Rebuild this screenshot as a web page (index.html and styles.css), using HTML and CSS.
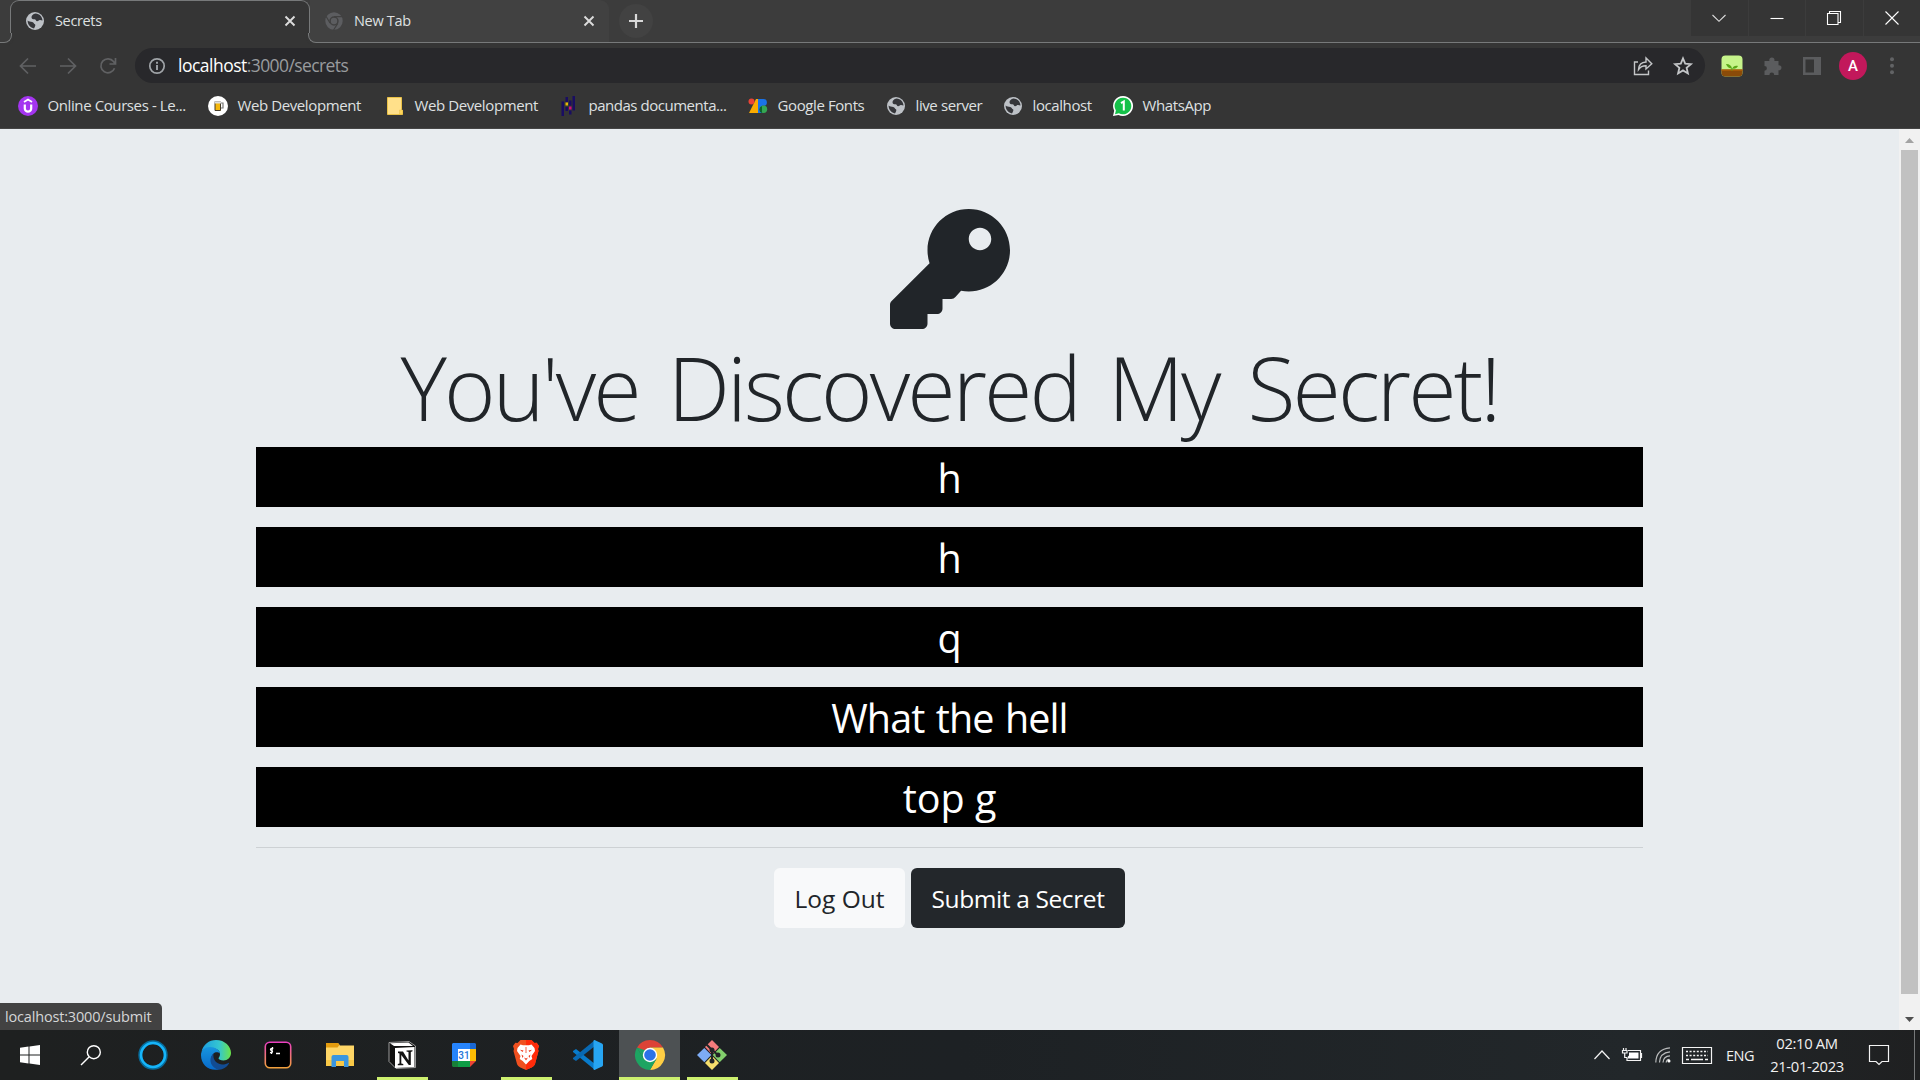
FILE: index.html
```html
<!DOCTYPE html>
<html lang="en">
<head>
<meta charset="utf-8">
<title>Secrets</title>
<link rel="stylesheet" href="styles.css">
</head>
<body>
<svg class="defs" width="0" height="0" aria-hidden="true">
  <symbol id="globe" viewBox="0 0 20 20"><circle cx="10" cy="10" r="9" fill="#bdc1c6"/><path d="M10.5 2.500C8 3 6.500 4.500 6.500 6.200c0 1.800 1.500 2 3 2.100 1.500.1 1.300 1.900 2.600 2 1.200.1 1.500-1.500 3-1.300 1 .1 1.700.7 2.400.5-.1-3.600-2.900-6.800-7-7zM2.600 9.500c1.300 1.300 3 1.100 4.600 1.500 1.700.4 1.400 1.700 2.700 2.200.9.4.4 2.300-.9 4.200-3.500-.5-6.400-3.600-6.400-7.900z" fill="#35363a"/></symbol>
</svg>
<div class="screen">
  <header class="tabstrip">
    <div class="lead"></div>
    <div class="tab active">
      <svg class="fav" viewBox="0 0 20 20"><use href="#globe"/></svg>
      <span class="tab-title t-secrets">Secrets</span>
      <svg class="close" viewBox="0 0 12 12"><path d="M1.500 1.500l9 9m0-9l-9 9"/></svg>
    </div>
    <div class="tab idle">
      <svg class="fav" viewBox="0 0 20 20"><circle cx="10" cy="10" r="6.700" fill="none" stroke="#5c5d60" stroke-width="4"/><circle cx="10" cy="10" r="3.200" fill="#5c5d60"/><path d="M10 5.700h8.500M6 12L2 5.200M13.800 12.400L9.600 19" stroke="#414141" stroke-width="1.200"/></svg>
      <span class="tab-title t-newtab">New Tab</span>
      <svg class="close" viewBox="0 0 12 12"><path d="M1.500 1.500l9 9m0-9l-9 9"/></svg>
    </div>
    <div class="newtab"><svg width="16" height="16" viewBox="0 0 16 16"><path d="M8 1v14M1 8h14" stroke="#d8d8d8" stroke-width="2.200"/></svg></div>
    <div class="winbtns">
      <div><svg width="14" height="8" viewBox="0 0 14 8"><path class="thin" d="M.5 1L7 7.300 13.500 1"/></svg></div>
      <div><svg width="14" height="14" viewBox="0 0 14 14"><path d="M.5 7.500h13"/></svg></div>
      <div><svg width="14" height="14" viewBox="0 0 14 14"><path d="M.5 2.500h10.500v11H.5zM2.500 2.500v-2h11v11h-2.500"/></svg></div>
      <div><svg width="14" height="14" viewBox="0 0 14 14"><path d="M.5.5l13 13m0-13l-13 13"/></svg></div>
    </div>
  </header>

  <nav class="toolbar">
    <div class="navbtns">
      <svg width="18" height="18" viewBox="0 0 18 18"><path d="M17 9H2m7-7.500L1.500 9 9 16.500"/></svg>
      <svg width="18" height="18" viewBox="0 0 18 18"><path d="M1 9h15M9 1.500L16.500 9 9 16.500"/></svg>
      <svg width="18" height="18" viewBox="0 0 18 18"><path d="M15.500 11.200A7 7 0 1 1 14.500 4.600l1.500 2M16.500 1v6h-6"/></svg>
    </div>
    <div class="omnibox">
      <svg class="info" width="18" height="18" viewBox="0 0 18 18"><circle cx="9" cy="9" r="7.200" fill="none" stroke="#a0a4a8" stroke-width="1.700"/><path d="M9 8v5M9 4.800v1.900" stroke="#a0a4a8" stroke-width="1.900"/></svg>
      <span class="url"><b>localhost</b>:3000/secrets</span>
      <svg class="share" width="20" height="20" viewBox="0 0 20 20"><path d="M5 6H1.500v12.500h14v-4M5.500 13.500c.3-4.800 2.800-7.300 7.500-7.500V2l5.800 5.800L13 13V9.800c-3.500 0-5.700 1-7.500 3.700z"/></svg>
      <svg class="star" width="20" height="20" viewBox="0 0 20 20"><path d="M10 2.300l2.200 5.300 5.700.5-4.300 3.700 1.300 5.600-4.900-3-4.900 3 1.300-5.600L2.100 8.100l5.700-.5z"/></svg>
    </div>
    <div class="tools">
      <svg width="22" height="22" viewBox="0 0 22 22"><defs><clipPath id="pc"><rect x=".5" y=".5" width="21" height="21" rx="4"/></clipPath></defs><g clip-path="url(#pc)"><path d="M0 0h22v22H0z" fill="#c6f48a"/><path d="M0 14.500h22V22H0z" fill="#8a4b08"/><path d="M0 14.500h22v1.500H0z" fill="#a85b08"/></g><path d="M11 13.500C8.500 13.500 6 12 5 9c3-.2 5.500 1.300 6 4.500zM11.500 13.500c.5-2.500 3-3.300 5.500-2.500-.8 2-3 3-5.500 2.500zM10.300 13h1.200v2.500h-1.200z" fill="#5aa718"/></svg>
      <svg width="20" height="20" viewBox="0 0 20 20"><path d="M2 5h4.500a2.600 2.600 0 1 1 4.800 0H15.500v4.300a2.500 2.500 0 1 1 0 4.900V19H11.200a2.400 2.400 0 1 0-4.800 0H1.500v-4.300a2.400 2.400 0 1 0 0-4.800V5z" fill="#5b5c5e"/></svg>
      <svg width="18" height="18" viewBox="0 0 18 18"><path d="M0 0h18v18H0zM2.500 2.500v13H11v-13z" fill="#5b5c5e" fill-rule="evenodd"/></svg>
      <div class="avatar">A</div>
      <svg width="4" height="18" viewBox="0 0 4 18"><g fill="#626365"><circle cx="2" cy="2.200" r="2"/><circle cx="2" cy="8.800" r="2"/><circle cx="2" cy="15.300" r="2"/></g></svg>
    </div>
  </nav>

  <nav class="bookmarks">
    <div class="bm w1"><svg viewBox="0 0 20 20"><circle cx="10" cy="10" r="10" fill="#a435f0"/><path d="M6.800 8.500v4a3.200 3.200 0 0 0 6.400 0v-4" fill="none" stroke="#fff" stroke-width="2.200"/><path d="M6 6l4-2.500L14 6" fill="none" stroke="#fff" stroke-width="1.800"/></svg><span>Online Courses - Le...</span></div>
    <div class="bm w2"><svg viewBox="0 0 20 20"><circle cx="10" cy="10" r="10" fill="#fff"/><path d="M12.500 7h2.500v5h-2.500" fill="none" stroke="#777" stroke-width="1.200"/><path d="M7 5.500h5.500V14.500H7z" fill="#f4b70c" stroke="#443b27"/><path d="M6.500 5.200h6.500v2.300H6.500z" fill="#ddd"/></svg><span>Web Development</span></div>
    <div class="bm w3"><svg viewBox="0 0 20 20"><path d="M2.500 1.500h14v12l1 1v4h-15z" fill="#ffe08a" stroke="#e9c147"/><path d="M14.500 14h3v4h-3z" fill="#ffd65c" stroke="#e9c147" stroke-width=".5"/></svg><span>Web Development</span></div>
    <div class="bm w4"><svg viewBox="0 0 20 20"><path d="M2.500 5.500H5V20H2.500zM13.500 0H16v14.500h-2.500zM6.500 1H9v5H6.500zM6.500 11H9v4H6.500zM10 4.500h2.500v5H10zM10 14.500h2.500v4H10z" fill="#190d62"/><path d="M6.500 6.500H9V9.500H6.500z" fill="#e5b70c"/><path d="M10 10.500h2.500v3H10z" fill="#d60b7a"/></svg><span>pandas documenta...</span></div>
    <div class="bm w5"><svg viewBox="0 0 20 20"><path d="M8 3h4v14H1z" fill="#f9ab00"/><circle cx="3.500" cy="5.500" r="3" fill="#ea4335"/><path d="M10 3h5.500a3.400 3.400 0 0 1 0 6.800H10z" fill="#1a73e8"/><path d="M10 3h4v14h-4z" fill="#1a73e8"/><circle cx="15.500" cy="13.300" r="3.700" fill="#34a853"/><path d="M14 9.900v7.100a3.700 3.700 0 0 1 0-7.100z" fill="#0d652d"/></svg><span>Google Fonts</span></div>
    <div class="bm w6"><svg viewBox="0 0 20 20"><use href="#globe"/></svg><span>live server</span></div>
    <div class="bm w7"><svg viewBox="0 0 20 20"><use href="#globe"/></svg><span>localhost</span></div>
    <div class="bm w8"><svg viewBox="0 0 20 20"><path d="M10 0a10 10 0 1 1-4.500 18.900L0 20l1.200-5.300A10 10 0 0 1 10 0z" fill="#fff"/><path d="M10.200 1.700a8.300 8.300 0 1 1-4.300 15.500l-3.900 1 .9-3.800A8.300 8.300 0 0 1 10.200 1.700z" fill="#15c149"/><path d="M8 7.200l2.800-1.700v9" fill="none" stroke="#fff" stroke-width="2"/></svg><span>WhatsApp</span></div>
  </nav>

  <div class="viewport">
    <main class="page">
      <svg class="key" width="120" height="120" viewBox="0 0 512 512"><path fill="#212529" d="M512 176.001C512 273.203 433.202 352 336 352c-11.220 0-22.190-1.062-32.827-3.069l-24.012 27.014A23.999 23.999 0 0 1 261.223 384H224v40c0 13.255-10.745 24-24 24h-40v40c0 13.255-10.745 24-24 24H24c-13.255 0-24-10.745-24-24v-78.059c0-6.365 2.529-12.470 7.029-16.971l161.802-161.802C163.108 213.814 160 195.271 160 176 160 78.798 238.797.001 335.999 0 433.488-.001 512 78.511 512 176.001zM336 128c0 26.510 21.490 48 48 48s48-21.490 48-48-21.490-48-48-48-48 21.490-48 48z"/></svg>
      <h1>You've Discovered My Secret!</h1>
      <p class="secret">h</p>
      <p class="secret">h</p>
      <p class="secret">q</p>
      <p class="secret phrase">What the hell</p>
      <p class="secret">top g</p>
      <hr>
      <div class="actions"><a class="btn light">Log Out</a><a class="btn dark">Submit a Secret</a></div>
      <div class="status"><span>localhost:3000/submit</span></div>
    </main>
    <div class="scrollbar">
      <svg width="9" height="5" viewBox="0 0 9 5"><path d="M0 5L4.500 0 9 5z" fill="#a3a3a3"/></svg>
      <div class="thumb"></div>
      <svg width="9" height="5" viewBox="0 0 9 5"><path d="M0 0h9L4.500 5z" fill="#505050"/></svg>
    </div>
  </div>

  <footer class="taskbar">
    <div class="app start"><svg width="20" height="20" viewBox="0 0 20 20"><path d="M0 2.800l8.500-1.200v7.900H0zM9.500 1.400L20 0v9.500H9.500zM0 10.500h8.500v7.900L0 17.200zM9.500 10.500H20V20L9.500 18.600z" fill="#fff"/></svg></div>
    <div class="app search"><svg width="20" height="20" viewBox="0 0 20 20"><path d="M0 20l8-8" stroke="#fff" stroke-width="1.500"/><circle cx="12.800" cy="7.200" r="6.500" fill="none" stroke="#fff" stroke-width="1.400"/></svg></div>
    <div class="app cortana"><svg width="30" height="30" viewBox="0 0 30 30"><circle cx="15" cy="15" r="12.700" fill="none" stroke="#086c9b" stroke-width="4"/><circle cx="15" cy="15" r="12" fill="none" stroke="#16b5fa" stroke-width="2.500"/></svg></div>
    <div class="app"><svg width="30" height="30" viewBox="0 0 30 30"><defs><linearGradient id="e1"><stop offset="0" stop-color="#1b9de2"/><stop offset=".6" stop-color="#35c6d0"/><stop offset="1" stop-color="#6be548"/></linearGradient><linearGradient id="e2" x2="0" y2="1"><stop offset="0" stop-color="#1795df"/><stop offset="1" stop-color="#0869c9"/></linearGradient></defs><path d="M.5 12C2 4.500 8 0 15 0c9 0 15 6.500 15 13 0 4.500-3.500 7.500-7.500 7.500-3 0-5-1.200-5-2.200 0-.8 1.500-1.500 1.500-4 0-3.500-3-6-8-6-5 0-9 1-10.500 3.700z" fill="url(#e1)"/><path d="M0 15c0-5 4-8 9-8 5.500 0 9.500 3 10 6.500-2-2-5-1.500-6.500 0-5 5-1.500 13.500 5.500 16C8 31.500 0 25 0 15z" fill="url(#e2)"/><path d="M12.500 13.500C11.500 19 15 24 21 24.500c2.500.1 5-1 6.500-1.600.5-.2.700.2.500.6-2.500 4-6 6-10 6.300C10 28 6.500 19 12.500 13.500z" fill="#124c93"/></svg></div>
    <div class="app term"><svg width="28" height="28" viewBox="0 0 28 28"><defs><linearGradient id="t1" x2="0" y2="1"><stop offset="0" stop-color="#ea3fc0"/><stop offset="1" stop-color="#f2a13c"/></linearGradient></defs><rect x="1.300" y="1.300" width="25.400" height="25.400" rx="4.500" fill="#000" stroke="url(#t1)" stroke-width="1.600"/><path d="M9.300 7.500c-3-.8-3.500 1.500-1.800 2s1.200 2.700-1.500 2M8.500 6l-1 7M12 12.500h4" fill="none" stroke="#fff" stroke-width="1.300"/></svg></div>
    <div class="app"><svg width="28" height="24" viewBox="0 0 28 24"><path d="M0 0h12l2 2.500H28V23H0z" fill="#ffd667"/><path d="M0 0h12l1.500 2-2 2.500H0z" fill="#e39b0e"/><path d="M0 17h28v6H0z" fill="#f9c846"/><path d="M5.500 24V14a2 2 0 0 1 2-2h13a2 2 0 0 1 2 2v10h-4.500v-6h-8v6z" fill="#3b96df"/></svg></div>
    <div class="app open notion"><svg width="28" height="28" viewBox="0 0 28 28"><path d="M1 1.500L21 .5l6.500 4.500v21.500L8 27.500 1 20.500z" fill="#111" stroke="#bbb" stroke-width=".8"/><path d="M2 2.300L20.500 1.500 25 5H6z" fill="#fff"/><path d="M7 7l19.500-1v20L7 27z" fill="#fff"/><path d="M10 10.500h5l5.500 9V11l-2-.4V9.500l6-.3v1.100l-1.700.6v13h-2L13.300 14v8.500l2 .5v1.300h-5.500V23l1.700-.5v-10L10 12z" fill="#111"/></svg></div>
    <div class="app"><svg class="cal" width="24" height="24" viewBox="0 0 24 24"><path d="M1 0h17v6H0V1z" fill="#2684fc"/><path d="M0 6h6v12H0z" fill="#2684fc"/><path d="M18 0h5l1 1v5h-6z" fill="#1967d2"/><path d="M18 6h6v12h-6z" fill="#fbbc04"/><path d="M6 18h12v6H6z" fill="#0f9d46"/><path d="M0 18h6v6H1l-1-1z" fill="#188038"/><path d="M18 18h6l-6 6z" fill="#ea4335"/><path d="M6 6h12v12H6z" fill="#fff"/><text x="12" y="15.700" text-anchor="middle" font-size="10" font-family="Roboto" font-weight="500" fill="#2676d9">31</text></svg></div>
    <div class="app open"><svg width="26" height="30" viewBox="0 0 26 30"><path d="M7.500 0h11l3 3 2.200-.3L26 6l-1 3 .5 2-3.500 13c-1 3-5 4-9 6-4-2-8-3-9-6L.5 11 1 9 0 6l2.300-3.300 2.200.3z" fill="#f0501f"/><path d="M13 0h5.500l3 3 2.200-.3L26 6l-1 3 .5 2-3.500 13c-1 3-5 4-9 6z" fill="#ff2b0a"/><path d="M4.500 8l3-3.500 2.500.8h6l2.500-.8 3 3.500.5 3-3.500 5 .8 3-3 2L13 24.500l-3.300-3.500-3-2 .8-3L4 11z" fill="#fff"/><path d="M7 9.800l3.500.7-1 1.500zM19 9.800l-3.500.7 1 1.500zM11 17.500l2 1 2-1-2 3zM12.600 7h.8v6h-.8zM8.500 14.500l2 1.500-1 2zM17.500 14.500l-2 1.500 1 2z" fill="#f0381a"/></svg></div>
    <div class="app"><svg width="30" height="30" viewBox="0 0 30 30"><path d="M0 11l3-2 19 15v6L0 12z" fill="#087bcb"/><path d="M0 19l3 2L22 6V0L0 18z" fill="#0869b3"/><path d="M21.500 0L29 3.500q1 .5 1 1.500v20q0 1-1 1.500L21.500 30q-1 0-1-1V1q0-1 1-1z" fill="#27a5f2"/></svg></div>
    <div class="app open current"><svg width="30" height="30" viewBox="0 0 30 30"><path d="M15 15L2 7.500A15 15 0 0 1 28 7.500H15z" fill="#dc4337"/><path d="M28 7.500A15 15 0 0 1 15 30l6.500-11.300L15 7.500z" fill="#ffce44"/><path d="M2 7.500A15 15 0 0 0 15 30l6.500-11.300H15L8.500 18.700z" fill="#1da462"/><path d="M2 7.500l6.500 11.300L15 12z" fill="#1da462"/><circle cx="15" cy="15" r="7.200" fill="#fff"/><circle cx="15" cy="15" r="5.800" fill="#2c72e8"/></svg></div>
    <div class="app open git"><svg width="30" height="30" viewBox="0 0 30 30"><path d="M15 0l7 7-7 7.500L8 7z" fill="#f47c7c"/><path d="M7.300 8l7 7-7 7.200L0 15z" fill="#7dacf5"/><path d="M22.700 8L30 15l-7.300 7.200-7-7.200z" fill="#82cf6c"/><path d="M15 15.700l7 7.300-7 7-7-7z" fill="#f6de6c"/><path d="M9 4l6 6v12M15 10l6 5" fill="none" stroke="#222427" stroke-width="2"/><g fill="#222427"><circle cx="15" cy="10" r="2.500"/><circle cx="15" cy="21" r="2.500"/><circle cx="21" cy="15" r="2.500"/></g></svg></div>
    <div class="tray">
      <svg class="up" width="16" height="10" viewBox="0 0 16 10"><path d="M.5 9L8 1l7.500 8"/></svg>
      <svg class="bat" width="20" height="14" viewBox="0 0 20 14"><path d="M6 2.500h12.500v10H5V10M18.500 5.500h1v4h-1"/><path d="M7 4.500h9.500v6H5.500V9L7 7.500z" fill="#fff" stroke="none"/><path d="M1.500 0v3M4 0v3M.5 2.500h4.500v2.500H.5zM2.700 5v4.500H5"/></svg>
      <svg class="wifi" width="16" height="16" viewBox="0 0 16 16"><path d="M.8 15.500C1 7 6 1.500 15 .8M4.500 15.500C4.700 9 8 5.500 15 4.800M8 15.500c.2-4 2.500-6.500 7-6.700" stroke="#b9bbbc"/><path d="M11.200 15.500c.1-1.800 1-3 3.300-3.200" stroke="#b9bbbc"/><circle cx="14" cy="14" r="1.500" fill="#fff" stroke="none"/></svg>
      <svg class="kbd" width="30" height="17" viewBox="0 0 30 17"><path d="M.5.5h29v16H.5z"/><path d="M4 4.500h22M4 8.500h22" stroke-dasharray="2 1.600" stroke-width="1.300"/><path d="M4 12.500h3m2 0h12m2 0h3" stroke-width="1.300"/></svg>
      <span class="lang">ENG</span>
      <div class="clock"><span class="time">02:10 AM</span><span class="date">21-01-2023</span></div>
      <svg class="note" width="20" height="20" viewBox="0 0 20 20"><path d="M.5.5h19v16h-6.500L10 19.500 7 16.500H.5z"/></svg>
      <i class="peek"></i>
    </div>
  </footer>
</div>
</body>
</html>
```
FILE: styles.css
```css
* { box-sizing: border-box; }
body { margin: 0; overflow: hidden; font-family: "Open Sans", "Noto Sans", sans-serif; }
svg { display: block; flex: none; overflow: visible; }
span { white-space: nowrap; }
.defs { position: absolute; }
.screen { width: 1920px; height: 1080px; display: flex; flex-direction: column; background: #e8ecef; }

/* Tab strip */
.tabstrip { height: 43px; display: flex; background: #3c3c3c; flex: none; box-shadow: inset 0 -1px #77797a; }
.lead { width: 10px; flex: none; }
.tab { height: 43px; display: flex; align-items: center; flex: none; }
.tab.active { position: relative; z-index: 1; width: 300px; padding: 0 13px 2px 14px; background: #353535; border: 1px solid #77797a; border-bottom: 0; border-radius: 9px 9px 0 0; }
/* Outward curves where the active tab meets the toolbar */
.tab.active::before, .tab.active::after { content: ""; position: absolute; bottom: 0; width: 9px; height: 9px; border: 0 solid #77797a; border-bottom-width: 1px; }
.tab.active::before { left: -9px; background: #3c3c3c; border-right-width: 1px; border-bottom-right-radius: 8px; box-shadow: 2px 2px #353535; }
.tab.active::after { right: -9px; background: #414141; border-left-width: 1px; border-bottom-left-radius: 8px; box-shadow: -2px 2px #353535; }
.tab.idle { width: 299px; height: 42px; padding: 0 14px 0 14px; background: #414141; border-radius: 0 9px 0 0; }
.fav { width: 20px; height: 20px; }
.tab-title { margin-left: 10px; flex: 1; font-size: 14.500px; line-height: 20px; color: #dfe0e1; }
.t-secrets { letter-spacing: -.35px; }
.t-newtab { letter-spacing: -.3px; }
.close { width: 12px; height: 12px; fill: none; stroke: #dcdcdc; stroke-width: 1.900; }
.newtab { width: 34px; height: 34px; margin: 4px 0 0 10px; border-radius: 17px; background: #424242; display: flex; align-items: center; justify-content: center; }
.winbtns { margin-left: auto; height: 36px; display: flex; gap: 1px; }
.winbtns div { width: 56.500px; background: #353535; display: flex; align-items: center; justify-content: center; }
.winbtns svg { fill: none; stroke: #fff; stroke-width: 1.100; }
.winbtns .thin { stroke: #ddd; stroke-width: 1.100; }

/* Toolbar */
.toolbar { height: 45px; flex: none; background: #353535; display: flex; align-items: center; }
.navbtns { width: 135px; display: flex; gap: 22px; padding-left: 19px; }
.navbtns svg { fill: none; stroke: #606163; stroke-width: 1.700; }
.omnibox { width: 1570px; height: 35px; border-radius: 18px; background: #28282b; display: flex; align-items: center; padding: 0 12px 0 13px; }
.url { margin-left: 12px; flex: 1; font-size: 17.500px; line-height: 24px; margin-top: -1px; color: #999b9e; letter-spacing: -.6px; }
.url b { font-weight: 400; color: #fff; letter-spacing: -.5px; }
.share, .star { fill: none; stroke: #c4c6c8; stroke-width: 1.400; }
.share { margin-right: 20px; }
.star { stroke-width: 1.800; }
.tools { display: flex; align-items: center; margin-left: 16px; }
.tools > :nth-child(2) { margin-left: 20px; }
.tools > :nth-child(3) { margin-left: 20px; }
.tools > :nth-child(4) { margin-left: 18px; }
.tools > :nth-child(5) { margin-left: 23px; }
.avatar { width: 28px; height: 28px; border-radius: 50%; background: #c2185b; color: #fff; font: 500 15px/28px Roboto, sans-serif; text-align: center; }

/* Bookmarks */
.bookmarks { height: 41px; flex: none; background: #353535; border-bottom: 1px solid #454545; display: flex; align-items: center; padding: 0 0 4px 18px; }
.bm { display: flex; align-items: center; gap: 9.500px; font-size: 15px; line-height: 20px; color: #dfe0e1; letter-spacing: -.4px; flex: none; }
.bm svg { width: 20px; height: 20px; }
.bm span { margin-top: -2px; }
.w1 { width: 190px; } .w2 { width: 177px; } .w3 { width: 174px; } .w4 { width: 189px; letter-spacing: -.47px; }
.w5 { width: 138px; } .w6 { width: 117px; } .w7 { width: 110px; } .w8 { width: 120px; }

/* Web page */
.viewport { height: 901px; flex: none; display: flex; }
.page { position: relative; width: 1899px; padding: 80px 256px 0; background: #e8ecef; text-align: center; }
.key { margin: 0 auto; }
h1 { margin: 9px -40px 10px; height: 99px; font-size: 88px; line-height: 99px; font-weight: 300; color: #212529; letter-spacing: -2.900px; word-spacing: 9px; white-space: nowrap; }
.secret { margin: 0 0 20px; height: 60px; line-height: 63px; background: #000; color: #fff; font-size: 39.500px; }
.phrase { letter-spacing: -.9px; word-spacing: 2px; }
hr { margin: 0 0 20px; border: 0; border-top: 1px solid #cdd1d4; }
.actions { display: flex; justify-content: center; gap: 6px; }
.btn { height: 60px; line-height: 61px; border-radius: 6px; font-size: 24.500px; white-space: nowrap; }
.light { width: 131px; background: #f8f9fa; color: #212529; }
.dark { width: 214px; background: #23272b; color: #fff; letter-spacing: -.38px; }
.status { position: absolute; left: 0; bottom: 0; width: 162px; height: 27px; background: #424242; border-radius: 0 5px 0 0; color: #d5d6d7; font-size: 14.500px; line-height: 27px; text-align: left; padding-left: 5px; letter-spacing: -.17px; }
.scrollbar { width: 21px; background: #f1f1f1; display: flex; flex-direction: column; align-items: center; padding: 9px 0 8px; justify-content: space-between; }
.thumb { width: 17px; height: 844px; background: #c1c1c1; margin: 7px 0 auto; }

/* Taskbar */
.taskbar { height: 50px; flex: none; display: flex; background: linear-gradient(90deg, #1e2020, #1d2124 50%, #22272a 85%, #1f2021); }
.app { width: 62px; display: flex; align-items: center; justify-content: center; flex: none; position: relative; }
.start { width: 60px; }
.search { width: 61px; }
.cortana { width: 64px; }
.open::after { content: ""; position: absolute; bottom: 0; left: 6px; width: 51px; height: 3px; background: #cdf06f; }
.current { width: 61px; background: #4d5153; }
.current::after { left: 0; width: 61px; }
.git { margin-left: 1px; }
.git::after { left: 6px; }
.tray { margin-left: auto; display: flex; align-items: center; color: #f1f1f1; height: 50px; }
.tray svg { fill: none; stroke: #f4f4f4; stroke-width: 1.200; }
.bat { margin-left: 12px; }
.wifi { margin-left: 13px; }
.kbd { margin-left: 11px; }
.lang { margin-left: 14px; width: 28px; font-size: 14.500px; letter-spacing: -.5px; }
.clock { margin-left: 11px; width: 84px; display: flex; flex-direction: column; align-items: center; font-size: 14.800px; line-height: 23px; letter-spacing: -.35px; }
.note { margin-left: 20px; }
.peek { margin-left: 25px; width: 6px; height: 50px; border-left: 1px solid #77797a; }
```
